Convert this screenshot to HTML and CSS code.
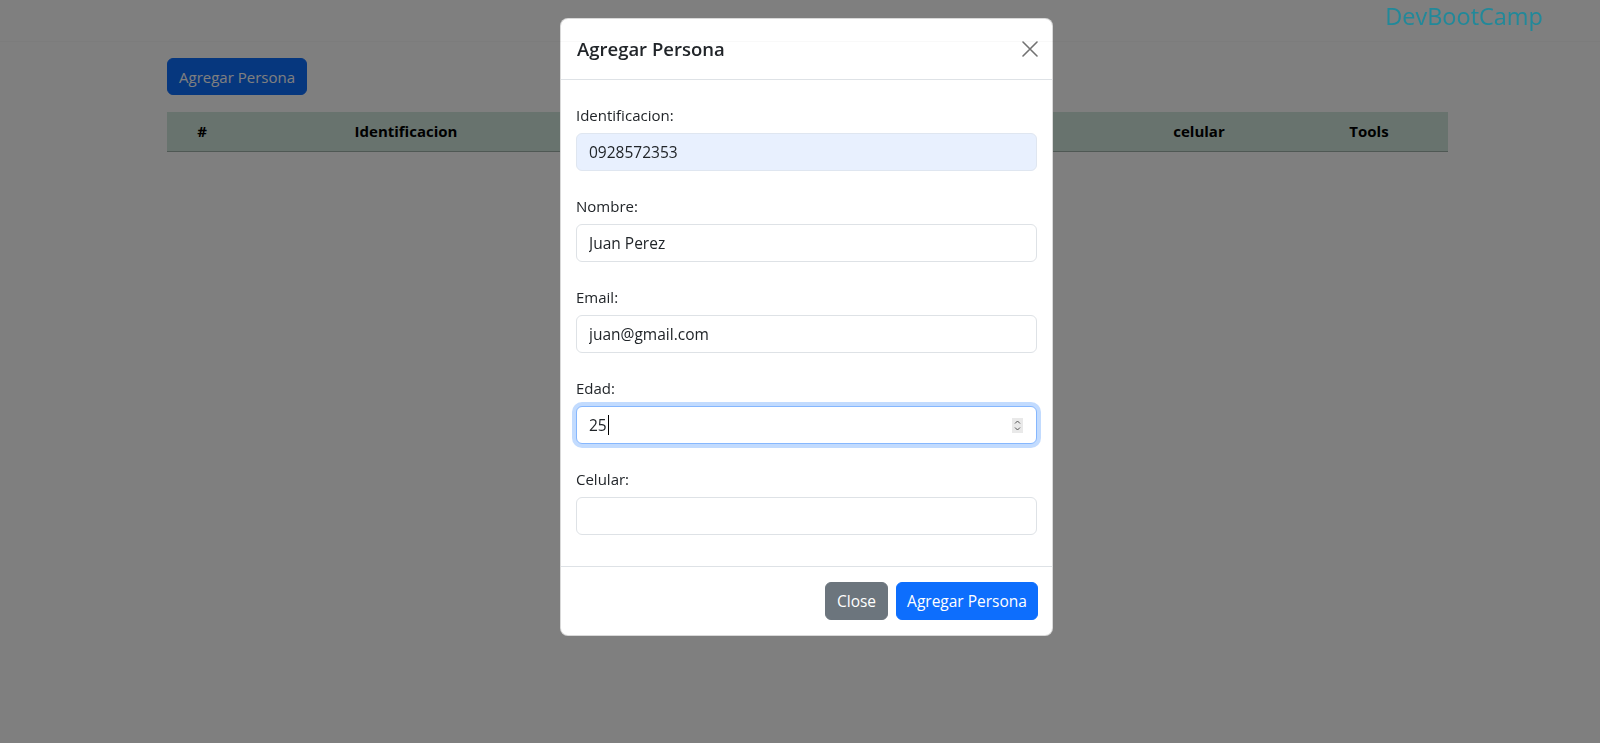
FILE: index.html
```html
<!DOCTYPE html>
<html lang="es">
<head>
<meta charset="utf-8">
<title>DevBootCamp</title>
<link rel="stylesheet" href="styles.css">
</head>
<body>
<header class="navbar">
  <span class="brand">DevBootCamp</span>
</header>

<main class="container">
  <button class="btn btn-primary page-btn" type="button">Agregar Persona</button>
  <table class="table">
    <colgroup>
      <col class="c-num"><col class="c-id"><col class="c-mid"><col class="c-mid"><col class="c-mid2"><col class="c-cel"><col class="c-tools">
    </colgroup>
    <thead>
      <tr><th>#</th><th>Identificacion</th><th>Nombre</th><th>Email</th><th>Edad</th><th>celular</th><th>Tools</th></tr>
    </thead>
    <tbody></tbody>
  </table>
</main>

<div class="backdrop"></div>

<div class="modal">
  <div class="modal-dialog">
    <div class="modal-content">
      <div class="modal-header">
        <h5 class="modal-title">Agregar Persona</h5>
        <button class="btn-close" type="button" aria-label="Close">
          <svg width="16" height="16" viewBox="0 0 16 16"><path d="M1 1L15 15M15 1L1 15" stroke="#000" stroke-width="1.6" stroke-linecap="round" fill="none"/></svg>
        </button>
      </div>
      <div class="modal-body">
        <div class="group">
          <label class="form-label">Identificacion:</label>
          <input class="form-control autofill" type="text" value="0928572353">
        </div>
        <div class="group">
          <label class="form-label">Nombre:</label>
          <input class="form-control" type="text" value="Juan Perez">
        </div>
        <div class="group">
          <label class="form-label">Email:</label>
          <input class="form-control" type="text" value="juan@gmail.com">
        </div>
        <div class="group">
          <label class="form-label">Edad:</label>
          <div class="form-control focused">
            <span class="val">25</span><span class="caret"></span>
            <span class="spin">
              <svg width="11" height="15" viewBox="0 0 11 15"><path d="M3 5.5L5.5 3L8 5.5M3 9.5L5.5 12L8 9.5" stroke="#555" stroke-width="1" fill="none"/></svg>
            </span>
          </div>
        </div>
        <div class="group">
          <label class="form-label">Celular:</label>
          <input class="form-control" type="text" value="">
        </div>
      </div>
      <div class="modal-footer">
        <button class="btn btn-secondary" type="button">Close</button>
        <button class="btn btn-primary" type="button">Agregar Persona</button>
      </div>
    </div>
  </div>
</div>
</body>
</html>
```

FILE: styles.css
```css
* { box-sizing: border-box; }

body {
  margin: 0;
  background: #fff;
  color: #212529;
  font-family: "Open Sans", "Noto Sans", sans-serif;
  font-size: 15px;
  line-height: 24px;
}

.navbar {
  position: relative;
  z-index: 1060;
  height: 42px;
  border-bottom: 1px solid rgba(0, 0, 0, 0.025);
  display: flex;
  justify-content: flex-end;
  align-items: flex-start;
  padding: 1px 57px 0 0;
}

.brand {
  font-size: 23.5px;
  line-height: 30px;
  color: #21899a;
}

.container {
  margin: 0 152px 0 167px;
  padding-top: 16px;
}

.btn {
  font-family: inherit;
  font-size: 15.5px;
  height: 38px;
  border: 1px solid transparent;
  border-radius: 6px;
  padding: 0 11px;
  color: #fff;
  cursor: pointer;
}

.btn-primary { background: #0d6efd; border-color: #0d6efd; }
.btn-secondary { background: #6c757d; border-color: #6c757d; }

.page-btn {
  display: block;
  height: 37px;
  width: 140px;
  padding: 0;
  font-size: 15px;
}

.table {
  margin-top: 17px;
  width: 100%;
  table-layout: fixed;
  border-collapse: collapse;
}

.c-num { width: 70px; }
.c-id { width: 338px; }
.c-mid { width: 178px; }
.c-mid2 { width: 177px; }
.c-cel { width: 182px; }
.c-tools { width: 158px; }

.table th {
  background: #d1e7dd;
  color: #000;
  font-weight: 700;
  text-align: center;
  height: 39px;
  padding: 0 8px;
  border-bottom: 1px solid #9fb1a8;
}

.backdrop {
  position: fixed;
  inset: 0;
  background: rgba(0, 0, 0, 0.5);
  z-index: 1050;
}

.modal {
  position: fixed;
  inset: 0;
  z-index: 1055;
}

.modal-dialog {
  width: 493px;
  margin: 18px 0 0 560px;
}

.modal-content {
  background: #fff;
  border: 1px solid rgba(0, 0, 0, 0.15);
  border-radius: 8px;
  display: flex;
  flex-direction: column;
}

.modal-header {
  height: 61px;
  display: flex;
  align-items: center;
  justify-content: space-between;
  padding: 0 14px 0 16px;
  border-bottom: 1px solid #dee2e6;
}

.modal-title {
  margin: 0;
  font-size: 18.5px;
  font-weight: 600;
  line-height: 28px;
  color: #212529;
}

.btn-close {
  width: 16px;
  height: 16px;
  padding: 0;
  border: 0;
  background: none;
  opacity: 0.55;
  display: flex;
  cursor: pointer;
}

.modal-body {
  display: flex;
  flex-direction: column;
  gap: 23px;
  padding: 23px 15px 31px 15px;
}

.group {
  display: flex;
  flex-direction: column;
}

.form-label {
  display: block;
  line-height: 24px;
  margin-bottom: 6px;
  color: #212529;
}

.form-control {
  height: 38px;
  width: 100%;
  border: 1px solid #dee2e6;
  border-radius: 6px;
  padding: 0 12px;
  font-family: inherit;
  font-size: 15.5px;
  color: #212529;
  background: #fff;
  outline: none;
}

.autofill {
  background: #e8f0fe;
  border-color: #dfe6f0;
}

.focused {
  display: flex;
  align-items: center;
  border-color: #86b7fe;
  box-shadow: 0 0 0 4px rgba(13, 110, 253, 0.25);
}

.caret {
  width: 1px;
  height: 20px;
  background: #000;
  margin-left: 1px;
}

.spin {
  margin-left: auto;
  margin-right: 1px;
  width: 11px;
  height: 15px;
  background: #e9e9e9;
  display: flex;
}

.modal-footer {
  display: flex;
  justify-content: flex-end;
  align-items: center;
  gap: 8px;
  padding: 15px 14px 15px 15px;
  border-top: 1px solid #dee2e6;
}

.modal-footer .btn-secondary { width: 63px; padding: 0; }
.modal-footer .btn-primary { width: 142px; padding: 0; }
```
